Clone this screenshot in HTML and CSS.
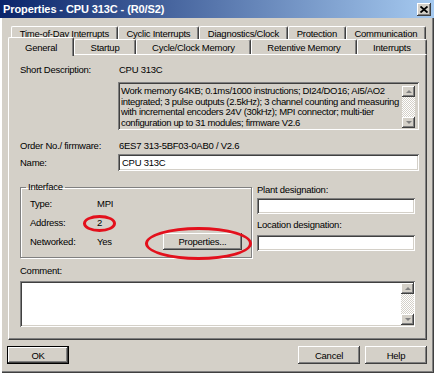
FILE: index.html
```html
<!DOCTYPE html>
<html lang="en">
<head>
    <meta charset="UTF-8">
    <title>Properties - CPU 313C - (R0/S2)</title>
    <link rel="stylesheet" href="styles.css">
</head>
<body>
<div class="window">
    <div class="titlebar">
        <span class="title">Properties - CPU 313C - (R0/S2)</span>
        <span class="close">
            <svg width="8" height="7" viewBox="0 0 8 7"><path d="M0.5 0.5 L7.5 6.5 M7.5 0.5 L0.5 6.5" stroke="#000" stroke-width="1.8"/></svg>
        </span>
    </div>

    <div class="tabs">
        <div class="tab-row back">
            <div class="tab">Time-of-Day Interrupts</div>
            <div class="tab">Cyclic Interrupts</div>
            <div class="tab">Diagnostics/Clock</div>
            <div class="tab">Protection</div>
            <div class="tab">Communication</div>
        </div>
        <div class="tab-row front">
            <div class="tab active">General</div>
            <div class="tab">Startup</div>
            <div class="tab">Cycle/Clock Memory</div>
            <div class="tab">Retentive Memory</div>
            <div class="tab">Interrupts</div>
        </div>
    </div>

    <div class="panel">
        <div class="row">
            <span class="label">Short Description:</span>
            <span>CPU 313C</span>
        </div>
        <div class="desc sunken">
            <div class="desc-text">Work memory 64KB; 0.1ms/1000 instructions; DI24/DO16; AI5/AO2<br>integrated; 3 pulse outputs (2.5kHz); 3 channel counting and measuring<br>with incremental encoders 24V (30kHz); MPI connector; multi-tier<br>configuration up to 31 modules; firmware V2.6</div>
            <div class="scrollbar">
                <span class="scroll-btn"><span class="arrow up"></span></span>
                <span class="track"></span>
                <span class="scroll-btn"><span class="arrow down"></span></span>
            </div>
        </div>
        <div class="row order">
            <span class="label">Order No./ firmware:</span>
            <span>6ES7 313-5BF03-0AB0 / V2.6</span>
        </div>
        <div class="row name">
            <span class="label">Name:</span>
            <span class="field sunken name-field">CPU 313C</span>
        </div>

        <div class="middle">
            <fieldset class="group">
                <legend>Interface</legend>
                <div class="group-row">
                    <span class="glabel">Type:</span>
                    <span>MPI</span>
                </div>
                <div class="group-row">
                    <span class="glabel">Address:</span>
                    <span>2</span>
                </div>
                <div class="group-row">
                    <span class="glabel">Networked:</span>
                    <span>Yes</span>
                    <span class="btn props">Properties...</span>
                </div>
            </fieldset>
            <div class="designations">
                <div class="dlabel">Plant designation:</div>
                <div class="field sunken dfield"></div>
                <div class="dlabel location">Location designation:</div>
                <div class="field sunken dfield loc"></div>
            </div>
        </div>

        <div class="comment-label">Comment:</div>
        <div class="comment sunken">
            <div class="comment-text"></div>
            <div class="scrollbar">
                <span class="scroll-btn"><span class="arrow up"></span></span>
                <span class="track"></span>
                <span class="scroll-btn"><span class="arrow down"></span></span>
            </div>
        </div>
    </div>

    <div class="buttons">
        <span class="btn ok">OK</span>
        <span class="btn cancel">Cancel</span>
        <span class="btn">Help</span>
    </div>

    <!-- red marks drawn over the dialog -->
    <div class="mark mark-address"></div>
    <div class="mark mark-props"></div>
</div>
</body>
</html>
```

FILE: styles.css
```css
body {
    margin: 0;
}
.window {
    position: relative;
    width: 434px;
    height: 373px;
    box-sizing: border-box;
    overflow: hidden;
    background: #d4d0c8;
    color: #000;
    font-family: "Liberation Sans", Arial, sans-serif;
    font-size: 9.5px;
    letter-spacing: -0.25px;
    box-shadow: inset 2px 0 #fff, inset -1px -1px #404040, inset -2px -2px #808080;
}
.titlebar {
    height: 18px;
    display: flex;
    align-items: center;
    justify-content: space-between;
    padding: 0 3px 0 3px;
    background: linear-gradient(to right, #0a246a, #a6caf0);
}
.title {
    color: #fff;
    font-weight: bold;
    font-size: 11px;
    letter-spacing: -0.1px;
}
.close {
    width: 14px;
    height: 13px;
    display: flex;
    align-items: center;
    justify-content: center;
    background: #d4d0c8;
    box-shadow: inset -1px -1px #404040, inset 1px 1px #fff, inset -2px -2px #808080;
}

/* tabs */
.tabs {
    padding-top: 8px;
}
.tab-row {
    display: flex;
}
.tab-row.back {
    height: 13px;
    margin: 0 8px 0 11px;
}
.tab-row.front {
    height: 15px;
    margin: 0 7px 0 8px;
}
.tab {
    flex: 1 1 auto;
    display: flex;
    align-items: center;
    justify-content: center;
    white-space: nowrap;
    border-top: 1px solid #fff;
    border-left: 1px solid #fff;
    border-right: 1px solid #404040;
    border-radius: 2px 2px 0 0;
    box-shadow: inset -1px 0 #808080;
    background: #d4d0c8;
}
.tab.active {
    position: relative;
    z-index: 1;
    margin-top: -2px;
    height: 18px;
    flex-grow: 1.05;
}

/* main panel */
.panel {
    margin: 0 7px 0 8px;
    height: 286px;
    box-sizing: border-box;
    padding: 7px 0 0 11px;
    border-top: 1px solid #fff;
    border-left: 1px solid #fff;
    border-right: 1px solid #404040;
    border-bottom: 1px solid #404040;
    box-shadow: inset -1px -1px #808080;
}
.row {
    display: flex;
    align-items: center;
    height: 14px;
}
.label {
    width: 99px;
    flex: none;
}
.sunken {
    box-sizing: border-box;
    box-shadow: inset 1px 1px #808080, inset -1px -1px #fff, inset 2px 2px #404040, inset -2px -2px #d4d0c8;
}
.desc {
    display: flex;
    width: 301px;
    height: 48px;
    margin: 6px 0 0 98px;
    padding: 4px 4px 2px 3px;
}
.desc-text {
    flex: 1;
    white-space: nowrap;
    letter-spacing: -0.33px;
    line-height: 10.6px;
}
.scrollbar {
    width: 13px;
    flex: none;
    display: flex;
    flex-direction: column;
}
.scroll-btn {
    height: 11px;
    flex: none;
    display: flex;
    align-items: center;
    justify-content: center;
    background: #d4d0c8;
    box-shadow: inset -1px -1px #404040, inset 1px 1px #fff, inset -2px -2px #808080;
}
.track {
    flex: 1;
    background: repeating-conic-gradient(#d4d0c8 0 25%, #fff 0 50%) 0 0 / 2px 2px;
}
.arrow {
    width: 0;
    height: 0;
    border-left: 3px solid transparent;
    border-right: 3px solid transparent;
}
.arrow.up {
    border-bottom: 3px solid #808080;
}
.arrow.down {
    border-top: 3px solid #808080;
}
.row.order {
    margin-top: 8px;
}
.row.name {
    margin-top: 2px;
    height: 17px;
}
.field {
    display: flex;
    align-items: center;
    background: #fff;
}
.name-field {
    width: 301px;
    height: 17px;
    margin-left: -1px;
    padding-left: 4px;
}

/* interface group + designations */
.middle {
    display: flex;
    margin-top: 10px;
}
.group {
    width: 232px;
    height: 77px;
    box-sizing: border-box;
    margin: 0;
    padding: 1px 0 0 9px;
    min-width: 0;
    border: 1px solid #808080;
    box-shadow: inset 1px 1px #fff, 1px 1px #fff;
}
.group legend {
    padding: 0 2px;
    margin-left: -4px;
    line-height: 12px;
}
.group-row {
    display: flex;
    align-items: center;
    height: 19px;
}
.glabel {
    width: 67px;
}
.btn {
    display: flex;
    align-items: center;
    justify-content: center;
    box-sizing: border-box;
    width: 62px;
    height: 18px;
    background: #d4d0c8;
    box-shadow: inset -1px -1px #404040, inset 1px 1px #fff, inset -2px -2px #808080;
}
.btn.props {
    width: 79px;
    height: 17px;
    margin: 0 9px 0 auto;
}
.designations {
    width: 158px;
    margin-left: 5px;
    padding-top: 2px;
}
.dlabel {
    height: 14px;
    line-height: 14px;
}
.dlabel.location {
    margin-top: 4px;
}
.dfield {
    height: 16px;
    margin-top: 1px;
}
.dfield.loc {
    margin-top: 3px;
}
.comment-label {
    margin-top: 6px;
    height: 14px;
    line-height: 14px;
}
.comment {
    display: flex;
    width: 395px;
    height: 46px;
    margin-top: 3px;
    padding: 2px 1px 2px 2px;
    background: #fff;
}
.comment-text {
    flex: 1;
}

/* dialog buttons */
.buttons {
    display: flex;
    gap: 5px;
    margin-top: 6px;
    padding: 0 7px;
}
.btn.ok {
    margin-right: auto;
    border: 1px solid #000;
}

/* red hand-drawn marks */
.mark {
    position: absolute;
    box-sizing: border-box;
    border: 3px solid #e3101c;
    border-radius: 50%;
}
.mark-address {
    left: 83px;
    top: 215px;
    width: 33px;
    height: 17px;
}
.mark-props {
    left: 145px;
    top: 227px;
    width: 107px;
    height: 33px;
}
```
